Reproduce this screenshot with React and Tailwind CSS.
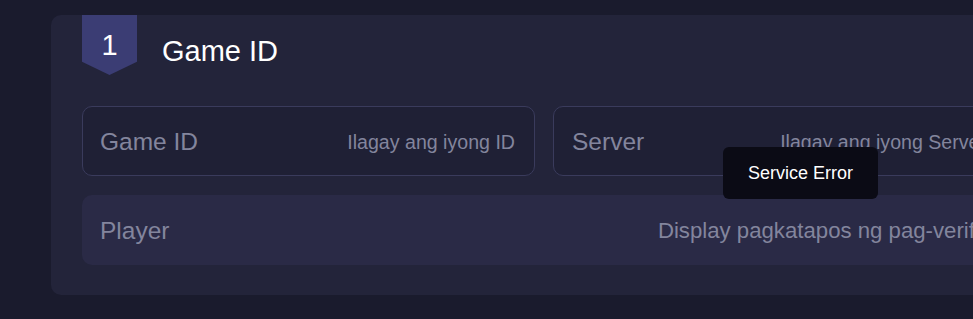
export default function App() {
  return (
    <div className="relative w-[973px] h-[319px] overflow-hidden bg-[#1a1b2d] pt-[15px] pl-[51px] font-[family-name:'Liberation_Sans',Arial,sans-serif]">
      <div className="w-[986px] rounded-[10px] bg-[#23243a] px-[31px] pb-[30px]">
        <div className="flex h-[91px] items-start">
          <div className="flex h-[60px] w-[55px] justify-center bg-[#3b3d74] pt-[16px] text-[29px] leading-none text-white [clip-path:polygon(0_0,100%_0,100%_78%,50%_100%,0_78%)]">
            1
          </div>
          <div className="ml-[25px] mt-[22px] text-[29px] leading-none text-white">Game ID</div>
        </div>
        <div className="grid grid-cols-2 gap-[18px]">
          <div className="flex h-[70px] items-center justify-between rounded-[10px] border border-[#3a3b5c] bg-[#1f2035] pl-[17px] pr-[19px] pt-[3px]">
            <span className="text-[24.5px] text-[#83859d]">Game ID</span>
            <span className="text-[19.6px] text-[#83859d]">Ilagay ang iyong ID</span>
          </div>
          <div className="flex h-[70px] items-center justify-between rounded-[10px] border border-[#3a3b5c] bg-[#1f2035] pl-[18px] pr-[19px] pt-[3px]">
            <span className="text-[24.5px] text-[#83859d]">Server</span>
            <span className="text-[19.6px] text-[#83859d]">Ilagay ang iyong Server</span>
          </div>
        </div>
        <div className="mt-[19px] flex h-[70px] items-center justify-between rounded-[10px] bg-[#2a2a46] pl-[18px] pr-[20px] pt-[2px]">
          <span className="text-[24.5px] text-[#83859d]">Player</span>
          <span className="text-[22.2px] text-[#83859d]">Display pagkatapos ng pag-verify</span>
        </div>
      </div>
      <div className="absolute left-[723px] top-[147px] flex h-[52px] w-[155px] items-center justify-center rounded-[6px] bg-[#0b0b15] text-[18px] text-white">
        Service Error
      </div>
    </div>
  );
}
